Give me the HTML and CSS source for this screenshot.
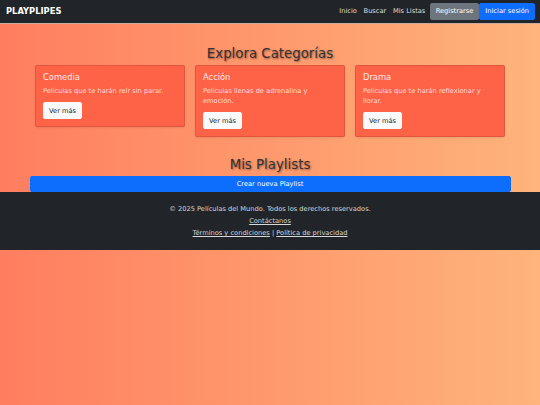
FILE: index.html
```html
<!DOCTYPE html>
<html lang="es">
<head>
<meta charset="utf-8">
<title>PlayPlipes</title>
<link rel="stylesheet" href="styles.css">
</head>
<body>
<nav class="navbar">
  <a class="brand" href="#">PLAYPLIPES</a>
  <div class="nav-right">
    <a class="nav-link" href="#">Inicio</a>
    <a class="nav-link" href="#">Buscar</a>
    <a class="nav-link" href="#">Mis Listas</a>
    <a class="btn btn-gray" href="#">Registrarse</a>
    <a class="btn btn-blue" href="#">Iniciar sesión</a>
  </div>
</nav>

<section class="section">
  <h2 class="title">Explora Categorías</h2>
  <div class="cards">
    <div class="card">
      <h5 class="card-title">Comedia</h5>
      <p class="card-text">Películas que te harán reír sin parar.</p>
      <a class="btn btn-light" href="#">Ver más</a>
    </div>
    <div class="card">
      <h5 class="card-title">Acción</h5>
      <p class="card-text">Películas llenas de adrenalina y emoción.</p>
      <a class="btn btn-light" href="#">Ver más</a>
    </div>
    <div class="card">
      <h5 class="card-title">Drama</h5>
      <p class="card-text">Películas que te harán reflexionar y llorar.</p>
      <a class="btn btn-light" href="#">Ver más</a>
    </div>
  </div>
</section>

<section class="section">
  <h2 class="title">Mis Playlists</h2>
  <a class="btn btn-blue btn-wide" href="#">Crear nueva Playlist</a>
</section>

<footer class="footer">
  <p>© 2025 Películas del Mundo. Todos los derechos reservados.</p>
  <p><a href="#">Contáctanos</a></p>
  <p><a href="#">Términos y condiciones</a> | <a href="#">Política de privacidad</a></p>
</footer>
</body>
</html>
```
FILE: styles.css
```css
html {
  min-height: 100%;
  background: linear-gradient(to right, #ff7e5f, #feb47b);
}
body {
  margin: 0;
  font-family: "DejaVu Sans", Verdana, sans-serif;
  font-size: 6.67px;
  line-height: 1.5;
  color: #212529;
}
a { text-decoration: none; }

.navbar {
  display: flex;
  align-items: center;
  justify-content: space-between;
  height: 22.5px;
  padding: 0 5px 0 6px;
  background: #212529;
  border-bottom: 1px solid rgba(255, 220, 200, 0.75);
}
.brand {
  font-size: 8.33px;
  font-weight: bold;
  color: #fff;
  line-height: 1;
}
.nav-right {
  display: flex;
  align-items: center;
}
.nav-link {
  padding: 0 3.33px;
  color: rgba(255, 255, 255, 0.85);
}

.btn {
  display: inline-block;
  padding: 2.5px 5px;
  border: 0.4px solid transparent;
  border-radius: 2px;
  line-height: 10px;
  text-align: center;
  color: #fff;
}
.btn-gray { background: #6c757d; border-color: #6c757d; margin-left: 1px; }
.btn-blue { background: #0d6efd; border-color: #0d6efd; }
.btn-light {
  background: #f8f9fa;
  border-color: #f8f9fa;
  color: #212529;
}

.section {
  margin-top: 22px;
}
.section + .section {
  margin-top: 20px;
}
.title {
  margin: 0 0 3.33px;
  font-size: 13.33px;
  font-weight: 500;
  line-height: 1.2;
  text-align: center;
  color: #333;
  text-shadow: 1px 1px 2px rgba(0, 0, 0, 0.45);
}

.cards {
  display: flex;
  justify-content: center;
  align-items: flex-start;
  gap: 10px;
}
.card {
  width: 150px;
  box-sizing: border-box;
  padding: 6.5px 7px;
  background: #ff6347;
  border: 0.4px solid rgba(0, 0, 0, 0.12);
  border-radius: 2px;
  box-shadow: 0 1px 2px rgba(0, 0, 0, 0.08);
}
.card-title {
  margin: 0 0 3.33px;
  font-size: 8.33px;
  font-weight: 500;
  line-height: 1.2;
  color: rgba(255, 255, 255, 0.88);
}
.card-text {
  margin: 0 0 6.67px;
  color: rgba(255, 255, 255, 0.78);
}

.btn-wide {
  display: block;
  width: 481px;
  box-sizing: border-box;
  margin: 0 auto;
  padding: 2.2px 5px;
}

.footer {
  padding: 11.5px 0 12px;
  background: #212529;
  color: #d6d7d8;
  text-align: center;
}
.footer p {
  margin: 0 0 2.2px;
  line-height: 10px;
}
.footer p:last-child { margin-bottom: 0; }
.footer a {
  color: #d6d7d8;
  text-decoration: underline;
}
```
